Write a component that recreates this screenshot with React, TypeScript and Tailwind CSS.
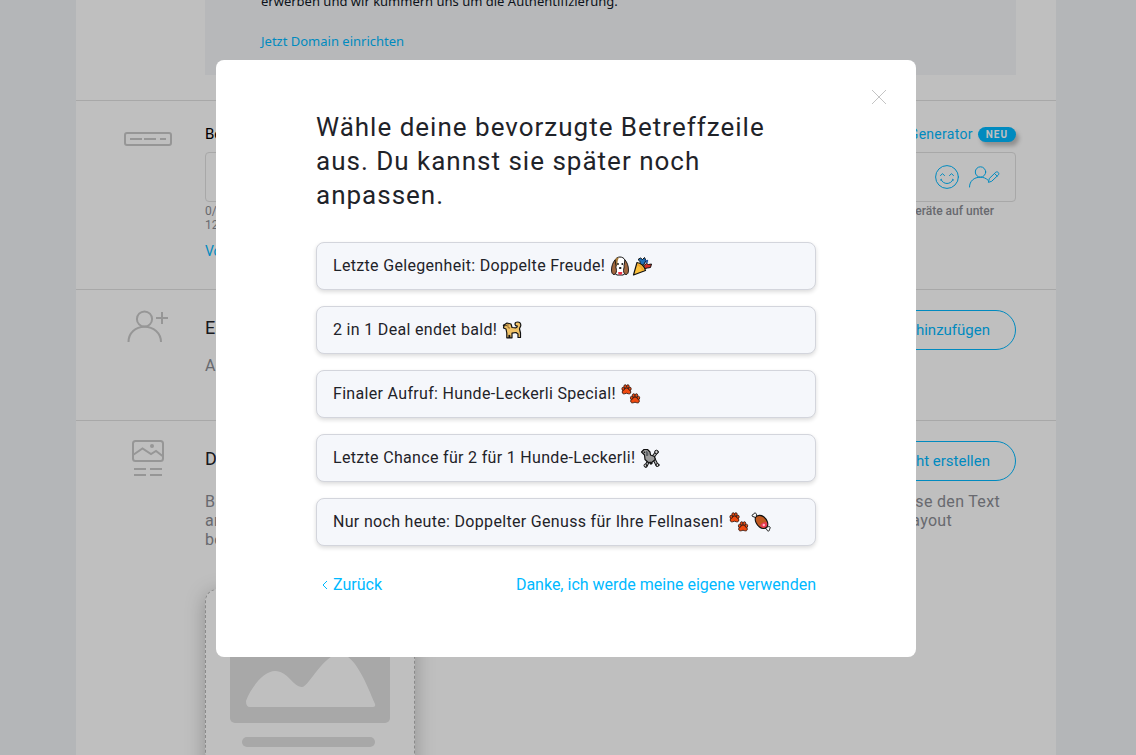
import type { ReactNode } from "react";

function DogFace() {
  return (
    <svg className="size-5 shrink-0" viewBox="0 0 20 20" aria-label="Hundegesicht" role="img" strokeLinejoin="round">
      <path d="M5 4C6 2 8 1 10 1s4 1 5 3l1 13-3 2H7l-3-2z" fill="#fff" stroke="#111" />
      <path d="M9 1.500C6 1 4.500 4 4.500 8l1.500 3c1-1 1.500-2 1.500-4 0-2 .5-4 1.500-5.500z" fill="#a57939" />
      <path d="M5 4c-2 2-3.500 6-3.500 10 0 3 1 4.500 2.500 4.500s2.500-2 2.500-4c0-2-1-3-.5-5z" fill="#a0673f" stroke="#111" strokeWidth=".9" />
      <path d="M15 4c2 2 3.500 6 3.500 10 0 3-1 4.500-2.500 4.500s-2.500-2-2.500-4c0-2 1-3 .5-5z" fill="#a0673f" stroke="#111" strokeWidth=".9" />
      <circle cx="8" cy="8" r=".9" fill="#111" />
      <circle cx="12.300" cy="8" r=".9" fill="#111" />
      <ellipse cx="10.200" cy="12" rx="1.300" ry=".9" fill="#111" />
      <path d="M8.200 16h4v1.500c-.8 1.800-3.200 1.800-4 0z" fill="#ea3046" />
    </svg>
  );
}

function PartyPopper() {
  return (
    <svg className="size-5 shrink-0" viewBox="0 0 20 20" aria-label="Konfetti" role="img" strokeLinejoin="round" strokeLinecap="round">
      <path d="M8 8C8.500 6 8 5 6 3.500L8.500 2l2 1.500 2-2 1.500 3L11.500 9z" fill="#1e70b8" stroke="#111" />
      <path d="M12 9.500l2.500-2 2 1 3-.5-1 3.500-3 .5-2.500.5z" fill="#d22f27" stroke="#111" />
      <path d="M13 4l2.500 2M15.500 4.500L14 6.500" stroke="#1e50a0" strokeWidth="1.400" />
      <path d="M5 6.500c4 .5 7.500 4 8.500 8L1.500 19z" fill="#fcc13b" stroke="#111" strokeWidth="1.200" />
      <path d="M6 8c3 1 5 3.500 6 6l-2 .8C9.500 12 7.500 10 5 9.500z" fill="#f1a52e" />
    </svg>
  );
}

function Dog() {
  return (
    <svg className="size-5 shrink-0" viewBox="0 0 20 20" aria-label="Hund" role="img" strokeLinejoin="round" strokeLinecap="round">
      <path
        d="M2 5l3-2 4 1 1 3.500 4 .3c1-.3 1.500-1 1-2-1 .2-2-.5-2-1.800C13 2.500 14.300 2 15.600 2c2 0 3.200 1.500 3.200 3.200 0 1.600-1.300 2.300-1.300 3.800l1 4v4.500H16V14l-2-1.500-4 .7v4.600H7.800v-2l-.8-.5v2.500H4.800V13L4 9 1.500 8z"
        fill="#f0c268"
        stroke="#111"
        strokeWidth="1.200"
      />
      <path d="M6 4.500c-.5 2 .2 3.500 1.500 3.500" fill="none" stroke="#a57939" strokeWidth="1.300" />
      <circle cx="4" cy="5.500" r=".7" fill="#111" />
      <circle cx="1.800" cy="5.500" r="1" fill="#111" />
    </svg>
  );
}

function PawPrints() {
  const paw = (
    <>
      <path d="M5 4c2 0 4.300 2 4.300 4S7.800 10 6.800 9.800L5 9.200l-1.800.6C2.200 10 .7 10 .7 8S3 4 5 4z" />
      <ellipse cx="1.700" cy="4.800" rx="1.300" ry="1.600" />
      <ellipse cx="3.700" cy="2.400" rx="1.300" ry="1.700" />
      <ellipse cx="6.400" cy="2.400" rx="1.300" ry="1.700" />
      <ellipse cx="8.400" cy="4.800" rx="1.300" ry="1.600" />
    </>
  );
  return (
    <svg className="size-5 shrink-0" viewBox="0 0 20 20" aria-label="Pfotenabdrücke" role="img" fill="#f04a10" stroke="#24100a" strokeWidth=".8">
      <g transform="translate(.5 0)">{paw}</g>
      <g transform="translate(9 9)">{paw}</g>
    </svg>
  );
}

function Poodle() {
  return (
    <svg className="size-5 shrink-0" viewBox="0 0 20 20" aria-label="Pudel" role="img" strokeLinejoin="round" strokeLinecap="round">
      <path d="M13 9l3-4M14 11l3 6M9 12l-3 6M10 12l1 3" fill="none" stroke="#111" strokeWidth="3.200" />
      <path d="M13 9l3-4M14 11l3 6M9 12l-3 6" fill="none" stroke="#b4b5b6" strokeWidth="1.400" />
      <path d="M1.500 4L4 1.500h3.500L10 4l.5 3 4 1.500.8 3-3 2.500-4 .5L5 11.500 4.500 7z" fill="#9b9b9a" stroke="#111" strokeWidth="1.200" />
      <path d="M6 2.500c2 1 3 3 2 5.500L6 8z" fill="#5e6266" />
      <circle cx="16.500" cy="4" r="1.800" fill="#d0cfce" stroke="#111" />
      <circle cx="17.500" cy="17" r="1.500" fill="#d0cfce" stroke="#111" />
      <circle cx="5.500" cy="17.500" r="1.500" fill="#d0cfce" stroke="#111" />
      <circle cx="4.500" cy="4.200" r=".8" fill="#111" />
    </svg>
  );
}

function MeatOnBone() {
  return (
    <svg className="size-5 shrink-0" viewBox="0 0 20 20" aria-label="Fleisch am Knochen" role="img" strokeLinejoin="round" strokeLinecap="round">
      <path d="M5 6L3 4.800C1.500 5 .8 4 1.300 3c.4-.8 1-.8 1.500-.8.200-1 1-1.400 1.800-1C5.800 1.700 5.500 3 5.300 3.500L7 5z" fill="#fff" stroke="#111" />
      <path d="M14 16l2 1.500c0 1.500 1.500 2 2.300 1 .5-.6.200-1.200 0-1.500 1-.2 1.200-1.200.7-1.900-.7-.9-1.800-.4-2.200 0L15 13.500z" fill="#fff" stroke="#111" />
      <path d="M4.500 5.500C6 3 10 2.500 13 5c3 2.500 4.500 6.500 3.500 9-1 2.600-5 3.400-8 1-3-2.300-5-6.500-4-9.500z" fill="#c25a20" stroke="#111" strokeWidth="1.100" />
      <path d="M9.500 13.500C9.500 11.500 12.500 9.800 15.800 10.500c.6 2 .3 4-1.300 4.800-2 .9-5 0-5-1.800z" fill="#ea3b56" />
      <circle cx="12.800" cy="13" r="1.200" fill="#ffb8c4" />
    </svg>
  );
}

function SubjectIcon() {
  return (
    <svg className="h-4 w-12" viewBox="0 0 48 16" fill="none" stroke="#c9c9c9" strokeWidth="2" aria-hidden="true">
      <rect x="1" y="2" width="46" height="12" rx="2" />
      <path d="M6 8h12M20 8h12M36 8h6" strokeWidth="1.800" />
    </svg>
  );
}

function RecipientIcon() {
  return (
    <svg className="h-9 w-12" viewBox="0 0 48 36" fill="none" stroke="#c9c9c9" strokeWidth="2" aria-hidden="true">
      <circle cx="20.500" cy="11" r="7.600" />
      <path d="M4.500 34c0-9 7-15.300 16-15.300S37 25 37 34M32 10h12M38 4v12" />
    </svg>
  );
}

function DesignIcon() {
  return (
    <svg className="h-10 w-12" viewBox="0 0 48 40" fill="none" stroke="#c9c9c9" strokeWidth="2" aria-hidden="true">
      <rect x="9" y="2" width="30" height="20" rx="2.500" />
      <path d="M9 16l9.500-6.500 8.500 5.500 5-3 6.500 5" />
      <circle cx="28" cy="7" r="2" fill="#c9c9c9" stroke="none" />
      <path d="M10 30h12M26 30h12M10 36h12M26 36h12" />
    </svg>
  );
}

function SmileyIcon() {
  return (
    <svg className="size-6" viewBox="0 0 24 24" fill="none" stroke="currentColor" strokeLinecap="round" aria-hidden="true">
      <circle cx="12" cy="12" r="11.400" />
      <path d="M5.500 10.500l2-1.800 2 1.800M14.500 10.500l2-1.800 2 1.800" strokeLinejoin="round" />
      <path d="M5.500 15l1-.7M18.500 15l-1-.7M6.200 14.800c2 5 9.600 5 11.600 0" />
    </svg>
  );
}

function PersonalizeIcon() {
  return (
    <svg className="h-6 w-8" viewBox="0 0 32 24" fill="none" stroke="currentColor" strokeLinecap="round" aria-hidden="true">
      <circle cx="12.500" cy="7" r="5.200" />
      <path d="M1.500 22C1.500 16 6 12.200 12.500 12.200c3 0 5.500 1 7.500 3" />
      <path d="M20.500 17l.8-3.500 6.500-6.300c1.600-1.200 3.900.8 2.700 2.600L24 16z" />
      <path d="M26.500 8.500l2.700 2.600" />
    </svg>
  );
}

function Section({ icon, children }: { icon: ReactNode; children: ReactNode }) {
  return (
    <section className="flex border-b border-[#e0e0e0] pr-10 pl-12">
      <div className="w-[81px] shrink-0 pt-[18px]">{icon}</div>
      <div className="min-w-0 flex-1">{children}</div>
    </section>
  );
}

const outlineButton =
  "h-10 rounded-full border border-[#00b9ff] px-[25px] text-[15px] text-[#00b9ff]";

function CampaignEditor() {
  return (
    <main className="mx-auto min-h-screen max-w-[980px] bg-white">
      <section className="border-b border-[#e0e0e0] pr-10 pb-[25px] pl-[129px]">
        <div className="bg-[#f4f6f9] px-14 pb-[25px] font-['Noto_Sans',sans-serif] text-[13px] leading-[18px]">
          <p className="-mt-2 pb-[22px] text-[#111827]">
            erwerben und wir kümmern uns um die Authentifizierung.
          </p>
          <a href="#domain" className="block text-[#00b9ff]">
            Jetzt Domain einrichten
          </a>
        </div>
      </section>

      <Section icon={<div className="pt-3"><SubjectIcon /></div>}>
        <div className="flex items-center justify-between pt-[23px] pb-2 leading-5">
          <label htmlFor="subject" className="text-[15px] text-black">
            Betreff
          </label>
          <div className="flex items-center gap-[5px]">
            <a href="#generator" className="text-sm tracking-[0.02em] text-[#00b9ff]">
              Generator
            </a>
            <span className="rounded-full bg-[#00b9ff] px-2 text-[10px] leading-[15px] font-bold tracking-widest text-white shadow-[3px_4px_4px_rgba(0,0,0,0.25)]">
              NEU
            </span>
          </div>
        </div>
        <div className="flex h-[50px] items-center gap-[9px] rounded border border-[#e0e0e0] pr-[15px] text-[#00b9ff]">
          <input id="subject" type="text" className="h-full min-w-0 flex-1 px-3 text-[15px] outline-none" />
          <button type="button" aria-label="Emoji einfügen">
            <SmileyIcon />
          </button>
          <button type="button" aria-label="Personalisieren">
            <PersonalizeIcon />
          </button>
        </div>
        <div className="flex justify-between pt-0.5 pr-[22px] text-xs leading-[14px] text-[#8b8d94]">
          <p>
            0/250
            <br />
            120
          </p>
          <p className="font-medium">Geräte auf unter</p>
        </div>
        <a href="#preview" className="mt-[9px] mb-7 block text-sm leading-5 text-[#00b9ff]">
          Vorschau
        </a>
      </Section>

      <Section icon={<RecipientIcon />}>
        <div className="flex items-start justify-between pt-5">
          <h2 className="text-lg leading-9 text-[#1f2329]">Empfänger</h2>
          <button type="button" className={outlineButton}>
            Empfänger hinzufügen
          </button>
        </div>
        <p className="pt-1.5 pb-[45px] text-base leading-[19px] text-[#8b8d94]">An</p>
      </Section>

      <Section icon={<DesignIcon />}>
        <div className="flex items-start justify-between pt-5">
          <h2 className="text-lg leading-9 text-[#1f2329]">Design</h2>
          <button type="button" className={outlineButton}>
            Nachricht erstellen
          </button>
        </div>
        <div className="flex justify-between pt-[11px] pr-4 text-base leading-[19px] tracking-[0.02em] text-[#8b8d94]">
          <p>
            Bild
            <br />
            an
            <br />
            bei
          </p>
          <p>
            lese den Text
            <br />
            Layout
          </p>
        </div>
        <div className="mt-10 h-80 w-[210px] rounded-xl border border-dashed border-[#b8b8b8] px-6 pt-[23px] shadow-[0_4px_20px_rgba(0,0,0,0.25)]">
          <svg className="h-[110px] w-40" viewBox="0 0 160 110" aria-hidden="true">
            <rect width="160" height="110" rx="5" fill="#e0e0e0" />
            <path
              d="M16 88C21 74 34 58 45 58c13 0 18 16 27 16 7 0 21-33 38-33 15 0 27 31 35 50q1 3-2 3H20q-4 0-4-6z"
              fill="#fff"
            />
          </svg>
          <div className="mt-3.5 mr-[15px] ml-3 h-2.5 rounded-full bg-[#e0e0e0]" />
        </div>
      </Section>
    </main>
  );
}

const subjects: { text: string; emojis: ReactNode }[] = [
  { text: "Letzte Gelegenheit: Doppelte Freude!", emojis: <><DogFace /><PartyPopper /></> },
  { text: "2 in 1 Deal endet bald!", emojis: <Dog /> },
  { text: "Finaler Aufruf: Hunde-Leckerli Special!", emojis: <PawPrints /> },
  { text: "Letzte Chance für 2 für 1 Hunde-Leckerli!", emojis: <Poodle /> },
  { text: "Nur noch heute: Doppelter Genuss für Ihre Fellnasen!", emojis: <><PawPrints /><MeatOnBone /></> },
];

function SubjectDialog() {
  return (
    <div
      role="dialog"
      aria-modal="true"
      aria-labelledby="dialog-title"
      className="relative w-full max-w-[700px] rounded-lg bg-white px-[100px] pt-[50px] pb-[61px]"
    >
      <button type="button" aria-label="Schließen" className="absolute top-7 right-7 text-[#c4c4c4]">
        <svg className="size-[18px]" viewBox="0 0 18 18" fill="none" stroke="currentColor" aria-hidden="true">
          <path d="M2 2l14 14M16 2L2 16" />
        </svg>
      </button>

      <h1 id="dialog-title" className="text-[26px] leading-[34px] tracking-[1px] text-[#1f2329]">
        Wähle deine bevorzugte Betreffzeile aus. Du kannst sie später noch anpassen.
      </h1>

      <div className="mt-[30px] flex flex-col gap-4">
        {subjects.map((subject) => (
          <button
            key={subject.text}
            type="button"
            className="flex h-12 items-center gap-[5px] rounded-lg border border-[#d3d5dc] bg-[#f5f7fb] px-4 text-left text-base tracking-[0.02em] text-[#1f2329] shadow-[0_2px_4px_rgba(0,0,0,0.14)]"
          >
            {subject.text}
            <span className="flex gap-0.5">{subject.emojis}</span>
          </button>
        ))}
      </div>

      <div className="mt-7 flex items-center justify-between text-base leading-[22px] text-[#00b9ff]">
        <button type="button" className="flex items-center gap-1 pl-[5px]">
          <svg className="h-3 w-2" viewBox="0 0 8 12" fill="none" stroke="currentColor" aria-hidden="true">
            <path d="M6 2L2 6l4 4" />
          </svg>
          Zurück
        </button>
        <button type="button">Danke, ich werde meine eigene verwenden</button>
      </div>
    </div>
  );
}

export default function App() {
  return (
    <div className="h-screen overflow-hidden bg-[#f0f3f6] pr-1 font-[Roboto,sans-serif]">
      <CampaignEditor />
      <div className="fixed inset-0 flex items-start justify-center bg-black/25 pt-[60px] pr-1">
        <SubjectDialog />
      </div>
    </div>
  );
}
